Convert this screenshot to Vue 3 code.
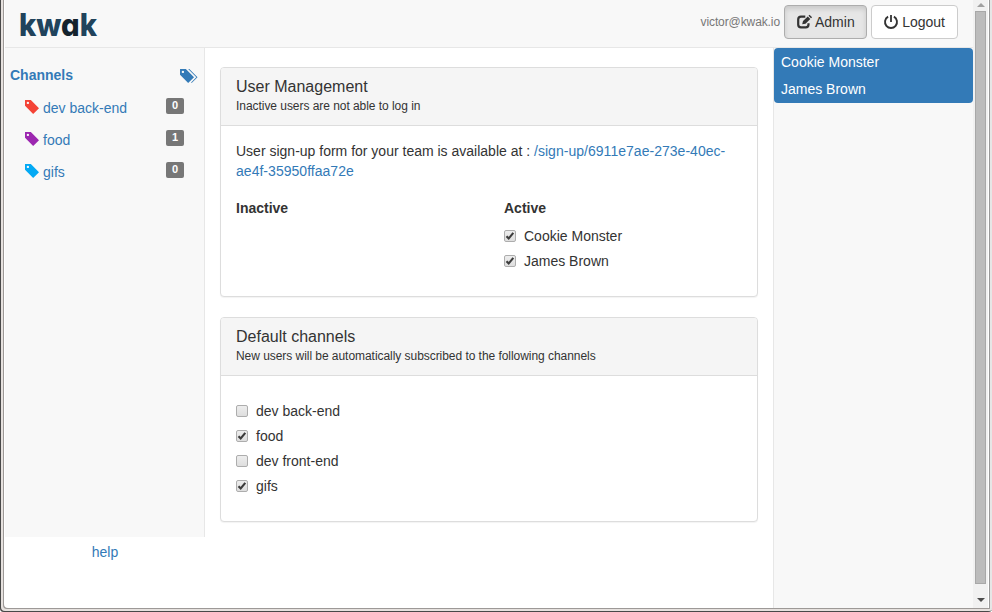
<script setup>
import { ref } from 'vue'

const channels = [
  { name: 'dev back-end', color: '#f44336', unread: 0 },
  { name: 'food', color: '#9c27b0', unread: 1 },
  { name: 'gifs', color: '#03a9f4', unread: 0 },
]
const users = ['Cookie Monster', 'James Brown']
const activeUsers = ref([
  { name: 'Cookie Monster', on: true },
  { name: 'James Brown', on: true },
])
const defaults = ref([
  { name: 'dev back-end', on: false },
  { name: 'food', on: true },
  { name: 'dev front-end', on: false },
  { name: 'gifs', on: true },
])
</script>

<template>
  <div class="window">
    <div class="app">
      <header class="topbar">
        <svg class="logo" width="82" height="42" viewBox="0 0 82 42">
          <text x="0" y="30.500" textLength="78" lengthAdjust="spacingAndGlyphs">kw<tspan class="dark">a</tspan>k</text>
        </svg>
        <div class="account">
          <span class="mail">victor@kwak.io</span>
          <button class="btn pressed">
            <svg width="16" height="14" viewBox="0 0 16 14">
              <path d="M8.300 1.700H4Q1.200 1.700 1.200 4.500v5Q1.200 12.300 4 12.300h4.700q2.800 0 2.800-2.800V8.200" fill="none" stroke="currentColor" stroke-width="2.200" />
              <path d="M5.200 9.300l.8-3.200L10.800 1.400l2.500 2.500-4.800 4.800zM11.500.8l1-1 2.600 2.500-1.100 1z" fill="currentColor" />
            </svg>
            <span>Admin</span>
          </button>
          <button class="btn">
            <svg width="16" height="14" viewBox="0 0 16 14">
              <path d="M4.100 1.700A6 6 0 1 0 9.900 1.700" fill="none" stroke="currentColor" stroke-width="1.900" />
              <path d="M6.100 0h1.800v7H6.100z" fill="currentColor" />
            </svg>
            <span>Logout</span>
          </button>
        </div>
      </header>

      <div class="columns">
        <div class="left">
          <nav class="sidebar">
            <div class="heading">
              <b>Channels</b>
              <svg width="18" height="14" viewBox="0 0 1543 1200">
                <path transform="matrix(1 0 0 -1 0 1200)" fill="currentColor" d="M2 700v475q0 11 7 18t18 7h474l700-700-500-500zM148 953q0-42 30-71 29-30 71-30t71 30q30 29 30 71t-30 71q-29 30-71 30t-71-30q-30-29-30-71zM701 1200h100l700-700-500-500-50 50 450 450z" />
              </svg>
            </div>
            <a v-for="c in channels" :key="c.name" class="channel">
              <svg width="14" height="14" viewBox="0 0 1200 1200" :style="{ color: c.color }">
                <path transform="matrix(1 0 0 -1 0 1200)" fill="currentColor" d="M1 700v475q0 10 7.500 17.500t17.500 7.500h474l700-700-500-500zM148 953q0-42 29-71 30-30 71.500-30t71.500 30q29 29 29 71t-29 71q-30 30-71.500 30t-71.500-30q-29-29-29-71z" />
              </svg>
              <span class="name">{{ c.name }}</span>
              <span class="badge">{{ c.unread }}</span>
            </a>
          </nav>
          <a class="help">help</a>
        </div>

        <main class="content">
          <section class="panel users">
            <div class="panel-head">
              <h3>User Management</h3>
              <small>Inactive users are not able to log in</small>
            </div>
            <div class="panel-body">
              <p>User sign-up form for your team is available at : <a>/sign-up/6911e7ae-273e-40ec-ae4f-35950ffaa72e</a></p>
              <div class="split">
                <div class="col"><b>Inactive</b></div>
                <div>
                  <b>Active</b>
                  <label v-for="u in activeUsers" :key="u.name" class="check">
                    <input v-model="u.on" type="checkbox" />
                    <span class="box"><svg v-if="u.on" width="10" height="10" viewBox="0 0 10 10"><path d="M1.500 5.200l2.200 2.300L8.300 1.800" /></svg></span>
                    <span>{{ u.name }}</span>
                  </label>
                </div>
              </div>
            </div>
          </section>
          <section class="panel defaults">
            <div class="panel-head">
              <h3>Default channels</h3>
              <small>New users will be automatically subscribed to the following channels</small>
            </div>
            <div class="panel-body">
              <label v-for="d in defaults" :key="d.name" class="check">
                <input v-model="d.on" type="checkbox" />
                <span class="box"><svg v-if="d.on" width="10" height="10" viewBox="0 0 10 10"><path d="M1.500 5.200l2.200 2.300L8.300 1.800" /></svg></span>
                <span>{{ d.name }}</span>
              </label>
            </div>
          </section>
        </main>

        <aside class="right">
          <div class="people">
            <a v-for="u in users" :key="u">{{ u }}</a>
          </div>
        </aside>
      </div>
    </div>

    <div class="scrollbar">
      <svg width="8" height="4" viewBox="0 0 8 4"><path d="M0 4L4 0l4 4z" fill="#a0a0a0" /></svg>
      <div class="thumb"></div>
      <svg width="8" height="4" viewBox="0 0 8 4"><path d="M0 0h8L4 4z" fill="#4c4c4c" /></svg>
    </div>
  </div>
</template>

<style>
body {
  background: #fff;
  overflow: hidden;
}
</style>

<style scoped>
* {
  box-sizing: border-box;
}
.window {
  width: 992px;
  height: 612px;
  display: flex;
  padding: 0 2px 3px 4px;
  font: 14px/20px "Liberation Sans", Arial, sans-serif;
  color: #333;
  background: #fff;
  border-radius: 0 0 4px 4px;
  box-shadow: inset 1px -1px #484848, inset -2px 0 #e6e6e6, inset 3px -3px #e6e1de, inset 4px -4px #9d9997, inset -3px 0 #999;
}
.app {
  flex: 1;
  min-width: 0;
  display: flex;
  flex-direction: column;
  padding: 0 0 1px 1px;
}
a,
.heading {
  color: #337ab7;
}
.topbar {
  height: 48px;
  flex: none;
  display: flex;
  justify-content: space-between;
  padding: 5px 15px 0 14px;
  background: #f8f8f8;
  border-bottom: 1px solid #e7e7e7;
}
.logo {
  font: 800 31.5px Inter, sans-serif;
  font-feature-settings: "cv11" 1;
  fill: #20435c;
}
.logo .dark {
  fill: #14232d;
}
.account {
  display: flex;
  align-items: flex-start;
  gap: 4px;
}
.mail {
  font-size: 12px;
  line-height: 34px;
  letter-spacing: -0.1px;
  color: #777;
}
.btn {
  height: 34px;
  display: flex;
  align-items: center;
  gap: 2px;
  padding: 0 12px;
  font: inherit;
  color: #333;
  background: #fff;
  border: 1px solid #ccc;
  border-radius: 4px;
}
.btn svg {
  overflow: visible;
  margin-top: -1px;
}
.btn.pressed {
  padding-right: 11.5px;
  background: #e6e6e6;
  border-color: #adadad;
  box-shadow: inset 0 3px 5px rgba(0, 0, 0, 0.125);
}
.columns {
  flex: 1;
  display: flex;
}
.left {
  width: 200px;
  flex: none;
  text-align: center;
}
.sidebar {
  height: 489px;
  padding: 17px 6px 0 5px;
  background: #f8f8f8;
  border-right: 1px solid #e7e7e7;
  text-align: left;
}
.heading {
  display: flex;
  justify-content: space-between;
  align-items: center;
  height: 20px;
  margin-bottom: 7px;
}
.heading svg {
  margin-top: 2px;
}
.channel {
  display: flex;
  height: 32px;
  padding: 6px 14px 0 15px;
}
.channel .name {
  flex: 1;
  margin-left: 4px;
}
.channel svg {
  margin-top: 2px;
}
.badge {
  width: 18px;
  height: 16px;
  font-size: 11px;
  line-height: 15px;
  font-weight: 700;
  text-align: center;
  color: #fff;
  background: #777;
  border-radius: 2px;
}
.help {
  display: block;
  padding-top: 5px;
}
.content {
  flex: 1;
  min-width: 0;
  padding: 19px 15px 0;
}
.panel {
  background: #fff;
  border: 1px solid #ddd;
  border-radius: 4px;
  box-shadow: 0 1px 1px rgba(0, 0, 0, 0.05);
}
.users {
  height: 230px;
  margin-bottom: 20px;
}
.defaults {
  height: 205px;
}
.panel-head {
  height: 58px;
  padding: 10px 15px;
  background: #f5f5f5;
  border-bottom: 1px solid #ddd;
  border-radius: 3px 3px 0 0;
}
h3 {
  margin: 0;
  font-size: 16px;
  line-height: 18px;
  font-weight: 400;
}
small {
  display: block;
  font-size: 12px;
  line-height: 20px;
  letter-spacing: -0.047px;
}
.panel-body {
  padding: 15px;
}
p {
  margin: 0 0 17px;
}
p a {
  letter-spacing: 0.03px;
}
.split {
  display: flex;
}
.col {
  width: 268px;
  flex: none;
}
.split b {
  display: block;
  margin-bottom: 8px;
}
.check {
  display: flex;
  align-items: center;
  gap: 8px;
  height: 20px;
  margin-bottom: 5px;
}
.defaults .panel-body {
  padding-top: 25px;
}
.check input {
  display: none;
}
.box {
  width: 12px;
  height: 12px;
  display: flex;
  background: linear-gradient(#ededed, #dedede);
  border: 1px solid #adadad;
  border-radius: 2px;
}
.box path {
  fill: none;
  stroke: #3c3c3c;
  stroke-width: 2.1;
}
.right {
  width: 200px;
  flex: none;
  background: #f8f8f8;
  border-left: 1px solid #e7e7e7;
}
.people {
  padding: 1px 7px 0;
  height: 55px;
  background: #337ab7;
  border-radius: 4px;
}
.people a {
  display: block;
  height: 27px;
  line-height: 27px;
  color: #fff;
}
.scrollbar {
  width: 15px;
  flex: none;
  margin: 0 2px 1px 0;
  display: flex;
  flex-direction: column;
  align-items: center;
  padding: 3px 0 5px;
  background: #f1f1f1;
}
.thumb {
  width: 11px;
  height: 573px;
  flex: none;
  margin: 4px 0 14px;
  background: #bcbcbc;
  border: 1px solid #a8a8a8;
}
</style>
